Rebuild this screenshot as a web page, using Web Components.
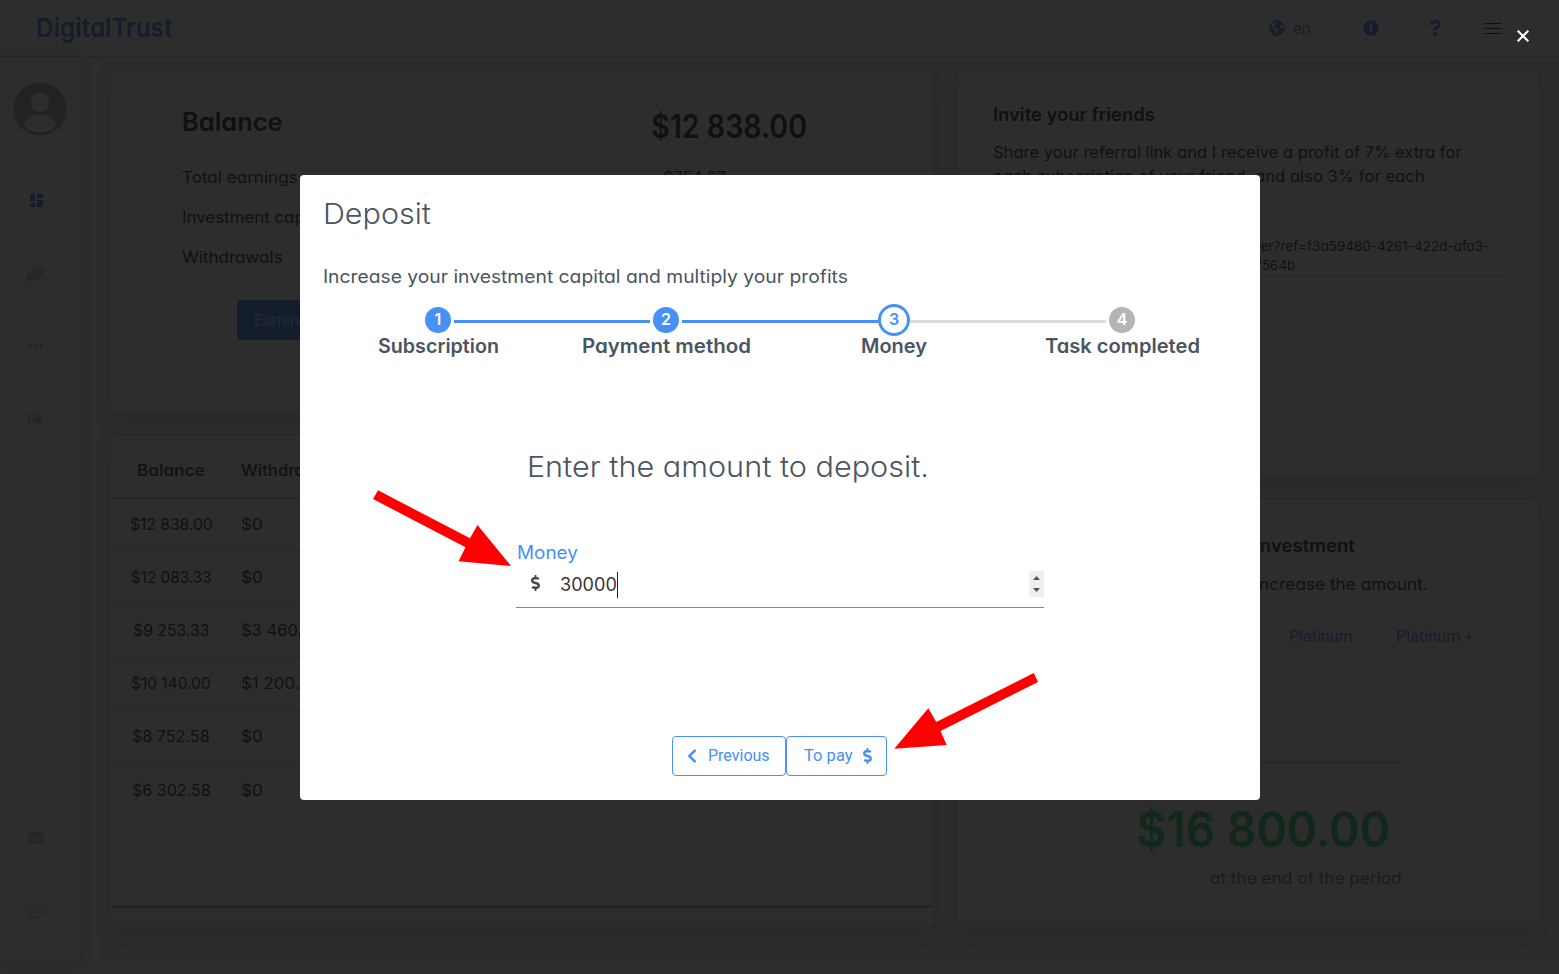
<!DOCTYPE html>
<html lang="en">
<head>
<meta charset="utf-8">
<title>DigitalTrust</title>
<style>
html,body{margin:0;height:100%;overflow:hidden}
body{font-family:Inter,"Noto Sans",sans-serif;font-feature-settings:"cv11";color:#363636;background:#fff}
</style>
</head>
<body>
<trust-app></trust-app>
<script>
const ICONS={
info:['0 0 512 512','<path d="M256 8C119.043 8 8 119.083 8 256c0 136.997 111.043 248 248 248s248-111.003 248-248C504 119.083 392.957 8 256 8zm0 110c23.196 0 42 18.804 42 42s-18.804 42-42 42-42-18.804-42-42 18.804-42 42-42zm56 254c0 6.627-5.373 12-12 12h-88c-6.627 0-12-5.373-12-12v-24c0-6.627 5.373-12 12-12h12v-64h-12c-6.627 0-12-5.373-12-12v-24c0-6.627 5.373-12 12-12h64c6.627 0 12 5.373 12 12v100h12c6.627 0 12 5.373 12 12v24z"/>'],
question:['0 0 384 512','<path d="M202.021 0C122.202 0 70.503 32.703 29.914 91.026c-7.363 10.58-5.093 25.086 5.178 32.874l43.138 32.709c10.373 7.865 25.132 6.026 33.253-4.148 25.049-31.381 43.63-49.449 82.757-49.449 30.764 0 68.816 19.799 68.816 49.631 0 22.552-18.617 34.134-48.993 51.164-35.423 19.86-82.299 44.576-82.299 106.405V320c0 13.255 10.745 24 24 24h72.471c13.255 0 24-10.745 24-24v-5.773c0-42.86 125.268-44.645 125.268-160.627C377.504 66.256 286.902 0 202.021 0zM192 373.459c-38.196 0-69.271 31.075-69.271 69.271 0 38.195 31.075 69.27 69.271 69.27s69.271-31.075 69.271-69.271-31.075-69.27-69.271-69.27z"/>'],
globe:['0 0 16 16','<path fill-rule="evenodd" d="M8 .25a7.75 7.75 0 1 0 0 15.5A7.75 7.75 0 0 0 8 .25zM2.6 4.6L4.3 2.6 6.6 1.8 8 2.4 7.3 3.8 5.9 4.4 5.7 5.6 4.6 6.3 5.2 7.2 7 7.5 8.6 8.7 9.6 9.5 9 11 7.9 12 7.2 14 6.3 13.9 5.8 11 4.5 9.5 4 7.9 2.5 6.4zM11.4 5.2L13 4.6 14 6.2 14.2 8.4 13.4 9 11.7 8.4 11 6.8z"/>'],
dollar:['0 0 288 512','<path d="M209.2 233.4l-108-31.6C88.7 198.2 80 186.5 80 173.5c0-16.3 13.2-29.5 29.5-29.5h66.3c12.2 0 24.2 3.7 34.2 10.5 6.1 4.1 14.3 3.1 19.5-2l34.8-34c7.1-6.9 6.1-18.4-1.8-24.5C238 74.8 207.4 64.1 176 64V16c0-8.8-7.2-16-16-16h-32c-8.8 0-16 7.2-16 16v48h-2.5C45.8 64-5.4 118.7.5 183.6c4.2 46.1 39.4 83.6 83.8 96.6l102.5 30c12.5 3.7 21.2 15.3 21.2 28.3 0 16.3-13.2 29.5-29.5 29.5h-66.3C100 368 88 364.3 78 357.5c-6.1-4.1-14.3-3.1-19.5 2l-34.8 34c-7.1 6.9-6.1 18.4 1.8 24.5 24.5 19.2 55.1 29.9 86.5 30v48c0 8.8 7.2 16 16 16h32c8.8 0 16-7.2 16-16v-48.2c46.6-.9 90.3-28.6 105.7-72.7 21.5-61.6-14.6-124.8-72.5-141.7z"/>'],
left:['0 0 320 512','<path d="M34.52 239.03L228.87 44.69c9.37-9.37 24.57-9.37 33.94 0l22.67 22.67c9.36 9.36 9.37 24.52.04 33.9L131.49 256l154.02 154.75c9.34 9.38 9.32 24.54-.04 33.9l-22.67 22.67c-9.37 9.37-24.57 9.37-33.94 0L34.52 272.97c-9.37-9.37-9.37-24.57 0-33.94z"/>'],
out:['0 0 512 512','<path d="M497 273L329 441c-15 15-41 4.5-41-17v-96H152c-13.3 0-24-10.7-24-24v-96c0-13.3 10.7-24 24-24h136V88c0-21.4 25.9-32 41-17l168 168c9.3 9.4 9.3 24.6 0 34zM192 436v-40c0-6.6-5.4-12-12-12H96c-17.7 0-32-14.3-32-32V160c0-17.7 14.3-32 32-32h84c6.6 0 12-5.4 12-12V76c0-6.6-5.4-12-12-12H96c-53 0-96 43-96 96v192c0 53 43 96 96 96h84c6.6 0 12-5.4 12-12z"/>'],
dots:['0 0 512 512','<path d="M328 256c0 39.8-32.2 72-72 72s-72-32.2-72-72 32.2-72 72-72 72 32.2 72 72zm104-72c-39.8 0-72 32.2-72 72s32.2 72 72 72 72-32.2 72-72-32.2-72-72-72zm-352 0c-39.8 0-72 32.2-72 72s32.2 72 72 72 72-32.2 72-72-32.2-72-72-72z"/>'],
mail:['0 0 512 512','<path d="M502.3 190.8c3.9-3.1 9.7-.2 9.7 4.7V400c0 26.5-21.5 48-48 48H48c-26.5 0-48-21.5-48-48V195.6c0-5 5.7-7.8 9.7-4.7 22.4 17.4 52.1 39.5 154.1 113.6 21.1 15.4 56.7 47.8 92.2 47.6 35.7.3 72-32.8 92.3-47.6 102-74.1 131.6-96.3 154-113.7zM256 320c23.2.4 56.6-29.2 73.4-41.4 132.7-96.3 142.8-104.7 173.4-128.7 5.8-4.5 9.2-11.5 9.2-18.9v-19c0-26.5-21.5-48-48-48H48c-26.5 0-48 21.5-48 48v19c0 7.4 3.4 14.3 9.2 18.9 30.6 23.9 40.7 32.4 173.4 128.7 16.8 12.2 50.2 41.8 73.4 41.4z"/>'],
whatsapp:['0 0 448 512','<path d="M380.9 97.1C339 55.1 283.2 32 223.9 32c-122.4 0-222 99.6-222 222 0 39.1 10.2 77.3 29.6 111L0 480l117.7-30.9c32.4 17.7 68.9 27 106.1 27h.1c122.3 0 224.1-99.6 224.1-222 0-59.3-25.2-115-67.1-157zm-157 341.6c-33.2 0-65.7-8.9-94-25.7l-6.7-4-69.8 18.3L72 359.2l-4.4-7c-18.5-29.4-28.2-63.3-28.2-98.2 0-101.7 82.8-184.5 184.6-184.5 49.3 0 95.6 19.2 130.4 54.1 34.8 34.9 56.2 81.2 56.1 130.5 0 101.8-84.9 184.6-186.6 184.6zm101.2-138.2c-5.5-2.8-32.8-16.2-37.9-18-5.1-1.9-8.8-2.8-12.5 2.8-3.7 5.6-14.3 18-17.6 21.8-3.2 3.7-6.5 4.2-12 1.4-32.6-16.3-54-29.1-75.5-66-5.7-9.8 5.7-9.1 16.3-30.3 1.8-3.7.9-6.9-.5-9.7-1.4-2.8-12.5-30.1-17.1-41.2-4.5-10.8-9.1-9.3-12.5-9.5-3.2-.2-6.9-.2-10.6-.2-3.7 0-9.7 1.4-14.8 6.9-5.1 5.6-19.4 19-19.4 46.3 0 27.3 19.9 53.7 22.6 57.4 2.8 3.7 39.1 59.7 94.8 83.8 35.2 15.2 49 16.5 66.6 13.9 10.7-1.6 32.8-13.4 37.4-26.4 4.6-13 4.6-24.1 3.2-26.4-1.3-2.5-5-3.9-10.5-6.6z"/>'],
hands:['0 0 20 16','<path d="M0 10.2L2.6 8.7V5.6L5.2 3.7V8.2a2.2 2.2 0 0 0 4.5 0V5.6h6.6a1 1 0 0 1 1 1V8.2L15.8 8.8V10.4L14.2 12.1 12.5 13.4H7.6L3.2 16 2.2 15.6 0 11.4z"/><path d="M6 3.2L8.7 1.2H13L16.8 0 20 4.9 18.3 6.3A1.9 1.9 0 0 0 16.5 4.8H9V8a1.4 1.4 0 0 1-2.9 0z"/>'],
grid:['0 0 13 13','<path d="M1 0h4v7H0V1a1 1 0 0 1 1-1zM7 0h5a1 1 0 0 1 1 1v3H7zM7 6h6v6a1 1 0 0 1-1 1H7zM0 9h5v4H1a1 1 0 0 1-1-1z"/>'],
avatar:['0 0 54 54','<circle cx="27" cy="27" r="26.6"/><circle cx="27" cy="20.5" r="9.6" fill="#fff"/><path d="M10.3 43.5C13.5 35.500 20 32.500 27 32.500s13.500 3 16.700 11A23.800 23.800 0 0 1 10.300 43.500z" fill="#fff"/>'],
burger:['0 0 16 11','<path d="M0 0h16v1H0zM0 5h16v1H0zM0 10h16v1H0z"/>'],
close:['0 0 12 12','<path d="M.7.7l10.600 10.600M11.300.7L.7 11.300" stroke="currentColor" stroke-width="2"/>'],
spin:['0 0 15 26','<path fill="#efefef" d="M0 0h15v26H0z"/><path fill="#505050" d="M4 9l3.500-4L11 9zM4 17h7l-3.500 4z"/>']
};
const define=(name,html)=>customElements.define(name,class extends HTMLElement{
  constructor(){super();const t=document.createElement('template');t.innerHTML=html;
  this.attachShadow({mode:'open'}).append(t.content.cloneNode(true));}
});

customElements.define('ui-icon',class extends HTMLElement{
  connectedCallback(){
    const [vb,body]=ICONS[this.getAttribute('name')];
    const w=this.getAttribute('w')||16,h=this.getAttribute('h')||16;
    if(!this.shadowRoot)this.attachShadow({mode:'open'});
    this.shadowRoot.innerHTML=`<style>:host{display:block;flex:none;width:${w}px;height:${h}px}svg{display:block}</style><svg width="${w}" height="${h}" viewBox="${vb}" fill="currentColor">${body}</svg>`;
  }
});

define('ui-card',`<style>:host{display:block;box-sizing:border-box;background:#fff;border-radius:6px;box-shadow:0 8px 20px rgba(10,10,10,.12),0 0 0 1px rgba(10,10,10,.03);overflow:visible}</style><slot></slot>`);

define('app-header',`<style>
:host{display:flex;box-sizing:border-box;height:57px;border-bottom:1px solid #d5c8ca;background:#fff;padding:0 58px 0 37px;align-items:center;color:#4690f8;flex:none}
.sp{flex:1}.logo{padding-bottom:2px}.en{margin:0 53px 0 9px;font-family:Roboto,sans-serif}.i{margin-right:50px}.q{margin-right:44px}.b{color:#222}
</style><ui-text class="logo" size="26" w="134" bold>DigitalTrust</ui-text><span class="sp"></span>
<ui-icon name="globe"></ui-icon><ui-text class="en" size="16" w="16">en</ui-text>
<ui-icon class="i" name="info"></ui-icon><ui-icon class="q" name="question" w="12"></ui-icon><ui-icon class="b" name="burger" h="11"></ui-icon>`);

define('side-nav',`<style>
:host{display:flex;flex-direction:column;align-items:center;box-sizing:border-box;width:80px;background:#fff;box-shadow:0 0 16px rgba(10,10,10,.25);padding-top:25px;color:#cdcdcd}
.av{color:#a8adb5}nav{display:flex;flex-direction:column;align-items:center;width:72px;align-self:flex-start}
nav>span{height:72.600px;display:flex;align-items:center}.on{color:#4690f8}.g{margin-top:28.700px}.low{margin-top:auto;margin-bottom:16px}
</style><ui-icon class="av" name="avatar" w="54" h="54"></ui-icon>
<nav class="g"><span class="on"><ui-icon name="grid" w="13" h="13"></ui-icon></span><span><ui-icon name="hands" w="20"></ui-icon></span><span><ui-icon name="dots"></ui-icon></span><span><ui-icon name="out"></ui-icon></span></nav>
<nav class="low"><span><ui-icon name="mail"></ui-icon></span><span><ui-icon name="whatsapp" w="14"></ui-icon></span></nav>`);

define('balance-panel',`<style>
:host{display:grid;grid-template-columns:402px 1fr;grid-template-rows:88px repeat(3,40px);padding:0 72px;row-gap:0}
.r{display:flex;align-items:center}.h{padding-top:16px}.n{justify-content:center;width:164px;padding-left:62px}.big{padding-top:26px}.sm{width:158px;padding-left:0;margin-left:30px}
.btn{margin:23px 0 0 54px;width:160px;height:40px;box-sizing:border-box;background:#4690f8;border-radius:4px;color:#fff;font-family:Roboto,sans-serif;font-weight:300;padding-left:18px}
</style>
<div class="r h"><ui-text size="25.500" w="98" bold>Balance</ui-text></div><div class="r n big"><ui-text size="32" w="153" bold>$12 838.00</ui-text></div>
<div class="r"><ui-text size="16" w="114">Total earnings</ui-text></div><div class="r n sm"><ui-text size="16" w="61">$754.67</ui-text></div>
<div class="r"><ui-text size="16" w="145">Investment capital</ui-text></div><div></div>
<div class="r"><ui-text size="16" w="99">Withdrawals</ui-text></div><div></div>
<div class="r btn"><ui-text size="16" w="60">Earnings</ui-text></div>`);

customElements.define('history-table',class extends HTMLElement{
  constructor(){super();
    const rows=[['$12 838.00',81,'$0',20],['$12 083.33',79,'$0',20],['$9 253.33',75,'$3 460.00',80],['$10 140.00',78,'$1 200.00',78],['$8 752.58',76,'$0',20],['$6 302.58',77,'$0',20]];
    this.attachShadow({mode:'open'}).innerHTML=`<style>:host{display:flex;flex-direction:column;height:100%;padding:0 1px}
    .r{display:grid;grid-template-columns:118px 1fr;column-gap:12px;height:53px;box-sizing:border-box;align-items:center;border-bottom:1px solid #d3d3d3;padding-bottom:2px}
    .r>:first-child{justify-self:center}.h{height:63px;padding-top:7px;padding-bottom:0;border-bottom-width:2px;color:#4a4a4a}.r:last-of-type{border:0}footer{margin-top:auto;height:3px;background:#c0c0c0;margin-bottom:19px}</style>
    <div class="r h"><ui-text size="16" w="66" bold>Balance</ui-text><ui-text size="16" w="99" bold>Withdrawals</ui-text></div>`+
    rows.map(r=>`<div class="r"><ui-text size="16" w="${r[1]}">${r[0]}</ui-text><ui-text size="16" w="${r[3]}">${r[2]}</ui-text></div>`).join('')+'<footer></footer>';
  }
});

define('invite-panel',`<style>:host{display:flex;flex-direction:column;padding:34px 35px 0 36px}
ui-text{line-height:24px}.p{margin-top:13px}.url{margin-top:49px;display:flex;flex-direction:column;align-items:flex-end;border-bottom:1px solid #b9b9b9;height:38px;padding-right:15px}.url ui-text{line-height:19px}.u2{margin-right:194px}
</style><ui-text size="18" w="160" bold>Invite your friends</ui-text>
<ui-text class="p" size="16" w="467">Share your referral link and I receive a profit of 7% extra for</ui-text>
<ui-text size="16" w="430">each subscription of your friend, and also 3% for each</ui-text>
<div class="url"><ui-text size="13" w="263">register?ref=f3a59480-4261-422d-afa3-</ui-text><ui-text class="u2" size="13" w="37">f564b</ui-text></div>`);

define('invest-panel',`<style>:host{display:flex;flex-direction:column;align-items:flex-end}
ui-text{line-height:24px}.a{margin:34px 185px 0 0}.b{margin:14px 112px 0 0}
.tabs{display:flex;gap:45px;margin:29px 66px 0 0;color:#4690f8;font-family:Roboto,sans-serif}
hr{width:380px;margin:113px 138px 0 0;border:0;border-top:1px solid #b5b5b5}.sum{color:#32d573;margin:36px 152px 0 0}.sum ui-text{line-height:60px}.end{margin:7px 138px 0 0;color:#7a7a7a}
</style><ui-text class="a" size="18" w="98" bold>investment</ui-text><ui-text class="b" size="16" w="171">increase the amount.</ui-text>
<div class="tabs"><ui-text size="16" w="62">Platinum</ui-text><ui-text size="16" w="76">Platinum +</ui-text></div><hr>
<div class="sum"><ui-text size="50" w="249" bold>$16 800.00</ui-text></div><ui-text class="end" size="16" w="190">at the end of the period</ui-text>`);

customElements.define('step-bar',class extends HTMLElement{
  constructor(){super();
    const s=[['Subscription',119,'done'],['Payment method',167,'done'],['Money',64,'now'],['Task completed',153,'todo']];
    this.attachShadow({mode:'open'}).innerHTML=`<style>:host{display:grid;grid-template-columns:repeat(4,228px)}
    .s{display:flex;flex-direction:column;align-items:center}.t{display:flex;align-items:center;width:100%;height:32px}
    .l{flex:1;height:3px;margin-top:3px}.c{flex:none;box-sizing:border-box;width:26px;height:26px;border-radius:50%;margin:0 3px;display:flex;align-items:center;justify-content:center;padding-bottom:2px;font:600 16px/24px Inter,sans-serif;color:#fff}
    .blue{background:#4690f8}.gray{background:#dbdbdb}.done .c{background:#4690f8}.todo .c{background:#b5b5b5}.now .c{width:32px;height:32px;margin:0;border:3px solid #4690f8;color:#4690f8}
    ui-text{line-height:20px}</style>`+
    s.map((x,i)=>`<div class="s ${x[2]}"><div class="t"><span class="l ${i==0?'':i<3?'blue':'gray'}"></span><span class="c">${i+1}</span><span class="l ${i<2?'blue':i==2?'gray':''}"></span></div><ui-text size="19.500" w="${x[1]}" bold>${x[0]}</ui-text></div>`).join('');
  }
});

define('money-field',`<style>:host{display:block;width:528px;box-sizing:border-box}
.lab{color:#4690f8;line-height:26px;margin-left:1.500px}.f{display:flex;height:41px;align-items:flex-start;border-bottom:1px solid #4690f8;color:#363636;padding-left:15px}
.d{margin-top:9px;color:#4a4a4a}.v{margin-left:20.500px;line-height:38px}.caret{width:1px;height:26px;background:#222;margin:6px auto 0 1px}.sp{margin-top:5px}</style>
<ui-text class="lab" size="18" w="59">Money</ui-text>
<div class="f"><ui-icon class="d" name="dollar" w="9"></ui-icon><ui-text class="v" size="18" w="55">30000</ui-text><span class="caret"></span><ui-icon class="sp" name="spin" w="15" h="26"></ui-icon></div>`);

define('ui-button',`<style>:host{display:flex;box-sizing:border-box;height:40px;border:1px solid #4690f8;border-radius:4px;background:#fff;color:#4690f8;align-items:center;justify-content:center;gap:11px;font-family:Roboto,sans-serif}</style><slot></slot>`);

define('deposit-modal',`<style>
:host{display:flex;flex-direction:column;box-sizing:border-box;width:960px;height:625px;background:#fff;border-radius:4px;padding:19px 24px 0;color:#4a5561}
.t{line-height:40px}.s{line-height:28px;margin-top:29px}step-bar{margin-top:13px}
.q{line-height:40px;margin:91px 0 0 204px}money-field{margin:53px 0 0 192px}.btns{display:flex;margin:128px 0 0 348px}.btns ui-text{padding-bottom:2px}.p{width:114px;gap:12px;padding-right:3px}.y{width:101px;padding-left:3px}
</style><ui-text class="t" size="28.500" w="105">Deposit</ui-text>
<ui-text class="s" size="18" w="523">Increase your investment capital and multiply your profits</ui-text>
<step-bar></step-bar>
<ui-text class="q" size="28.500" w="399">Enter the amount to deposit.</ui-text>
<money-field></money-field>
<div class="btns"><ui-button class="p"><ui-icon name="left" w="10"></ui-icon><ui-text size="16" w="60">Previous</ui-text></ui-button><ui-button class="y"><ui-text size="16" w="47">To pay</ui-text><ui-icon name="dollar" w="9"></ui-icon></ui-button></div>`);

/* Callout arrows lie on top of the dialog. */
define('callout-arrows',`<style>:host{position:absolute;inset:0;pointer-events:none}svg{display:block}</style>
<svg width="1559" height="974" fill="#f00"><path d="M373 499L378 490.300 470 538.300 477.500 525 511 566 458.500 561.300 465.500 547.300z"/><path d="M1033.700 673L1038 682 940.500 731 946.700 745 894.300 748.700 928.300 708.300 936.300 722z"/></svg>`);

define('trust-app',`<style>
:host{display:flex;flex-direction:column;height:974px;width:1559px;position:relative;overflow:hidden}
.body{display:flex;height:906px}side-nav{position:relative}.main{flex:1;display:grid;grid-template-columns:822px 581px;column-gap:25px;margin-left:20px;padding:12px 0 0 11px;background:#eef7f4;align-content:start}
.col{display:flex;flex-direction:column;gap:24px}.b{height:343px}.h{height:491px}.i{height:407px}.v{height:427px}
.over{position:absolute;inset:0;background:rgba(10,10,10,.86);display:flex;align-items:center;justify-content:center}
.wrap{margin:1px 0 0 1px}.x{position:absolute;right:30px;top:30px;color:#fff}
</style><app-header></app-header>
<div class="body"><side-nav></side-nav><div class="main">
<div class="col"><ui-card class="b"><balance-panel></balance-panel></ui-card><ui-card class="h"><history-table></history-table></ui-card></div>
<div class="col"><ui-card class="i"><invite-panel></invite-panel></ui-card><ui-card class="v"><invest-panel></invest-panel></ui-card></div>
</div></div>
<div class="over"><deposit-modal class="wrap"></deposit-modal><ui-icon class="x" name="close" w="12" h="12"></ui-icon></div>
<callout-arrows></callout-arrows>`);

/* One line of text, stretched so that its ink fills the width given in "w". */
customElements.define('ui-text',class extends HTMLElement{
  connectedCallback(){
    if(this.shadowRoot)return;
    const size=+this.getAttribute('size'),w=+this.getAttribute('w'),bold=this.hasAttribute('bold');
    const weight=bold?'font-weight:600;':size>28?'font-weight:350;':'';
    this.attachShadow({mode:'open'}).innerHTML=`<style>:host{display:block;flex:none;white-space:nowrap;width:${w}px;font-size:${size}px;${weight}}span{display:inline-block;margin-left:-.05em;transform-origin:.05em 50%}</style><span><slot></slot></span>`;
    const s=this.shadowRoot.querySelector('span');
    s.style.transform=`scaleX(${(w/(s.getBoundingClientRect().width-.1*size)).toFixed(4)})`;
  }
});
</script>
</body>
</html>
